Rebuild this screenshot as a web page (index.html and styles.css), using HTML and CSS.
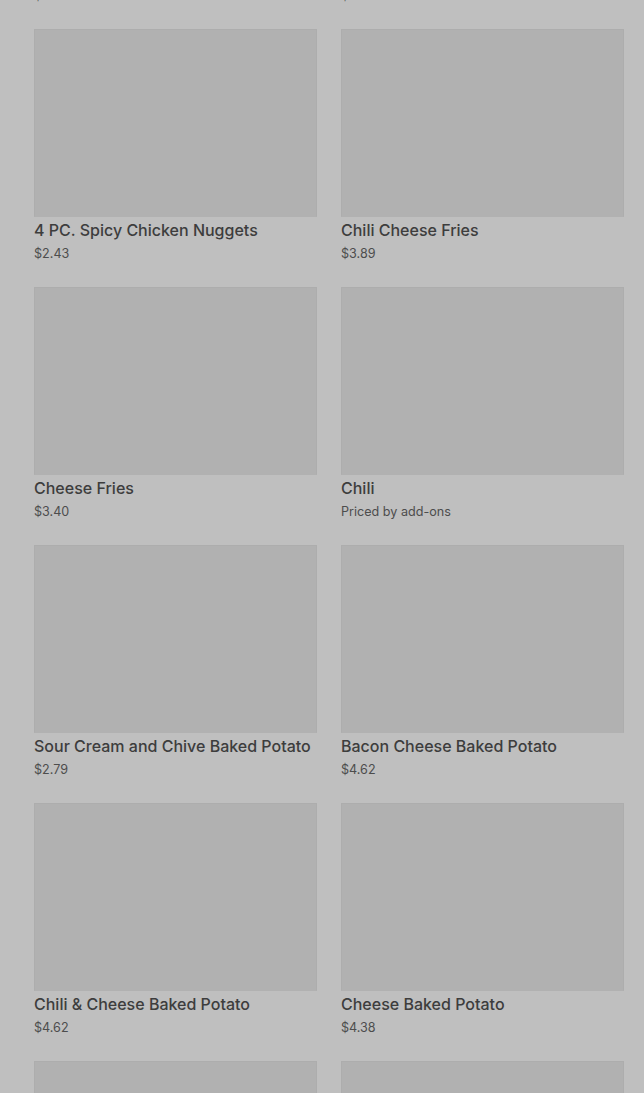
FILE: index.html
```html
<!DOCTYPE html>
<html lang="en">
<head>
    <meta charset="UTF-8">
    <meta name="viewport" content="width=device-width, initial-scale=1.0">
    <title>Menu</title>
    <link rel="stylesheet" href="styles.css">
</head>
<body>
    <div class="menu">
        <div class="item">
            <div class="thumb"></div>
            <div class="name">Spicy Chicken Sandwich</div>
            <div class="price">$4.49</div>
        </div>
        <div class="item">
            <div class="thumb"></div>
            <div class="name">Chicken Sandwich</div>
            <div class="price">$4.19</div>
        </div>
        <div class="item">
            <div class="thumb"></div>
            <div class="name">4 PC. Spicy Chicken Nuggets</div>
            <div class="price">$2.43</div>
        </div>
        <div class="item">
            <div class="thumb"></div>
            <div class="name">Chili Cheese Fries</div>
            <div class="price">$3.89</div>
        </div>
        <div class="item">
            <div class="thumb"></div>
            <div class="name">Cheese Fries</div>
            <div class="price">$3.40</div>
        </div>
        <div class="item">
            <div class="thumb"></div>
            <div class="name">Chili</div>
            <div class="price">Priced by add-ons</div>
        </div>
        <div class="item">
            <div class="thumb"></div>
            <div class="name">Sour Cream and Chive Baked Potato</div>
            <div class="price">$2.79</div>
        </div>
        <div class="item">
            <div class="thumb"></div>
            <div class="name">Bacon Cheese Baked Potato</div>
            <div class="price">$4.62</div>
        </div>
        <div class="item">
            <div class="thumb"></div>
            <div class="name">Chili &amp; Cheese Baked Potato</div>
            <div class="price">$4.62</div>
        </div>
        <div class="item">
            <div class="thumb"></div>
            <div class="name">Cheese Baked Potato</div>
            <div class="price">$4.38</div>
        </div>
        <div class="item">
            <div class="thumb"></div>
            <div class="name">Plain Baked Potato</div>
            <div class="price">$1.99</div>
        </div>
        <div class="item">
            <div class="thumb"></div>
            <div class="name">Side Salad</div>
            <div class="price">$2.19</div>
        </div>
    </div>
</body>
</html>
```

FILE: styles.css
```css
html, body {
    margin: 0;
    height: 100%;
    overflow: hidden;
}
body {
    font-family: Inter, "Liberation Sans", sans-serif;
    background-color: #bfbfbf;
    color: #3d3d3d;
}
.menu {
    display: grid;
    grid-template-columns: 283px 283px;
    column-gap: 24px;
    row-gap: 24px;
    margin-top: -229px;
    padding-left: 34px;
}
.thumb {
    height: 186px;
    background-color: #b1b1b1;
    border: 1px solid #adadad;
    border-bottom-color: #b1b1b1;
    margin-bottom: 1px;
}
.name {
    font-size: 16px;
    font-weight: 500;
    line-height: 24px;
    white-space: nowrap;
}
.price {
    font-size: 12.6px;
    line-height: 21px;
    padding-top: 1px;
    margin-bottom: -1px;
    color: #4d4d4d;
}
```
